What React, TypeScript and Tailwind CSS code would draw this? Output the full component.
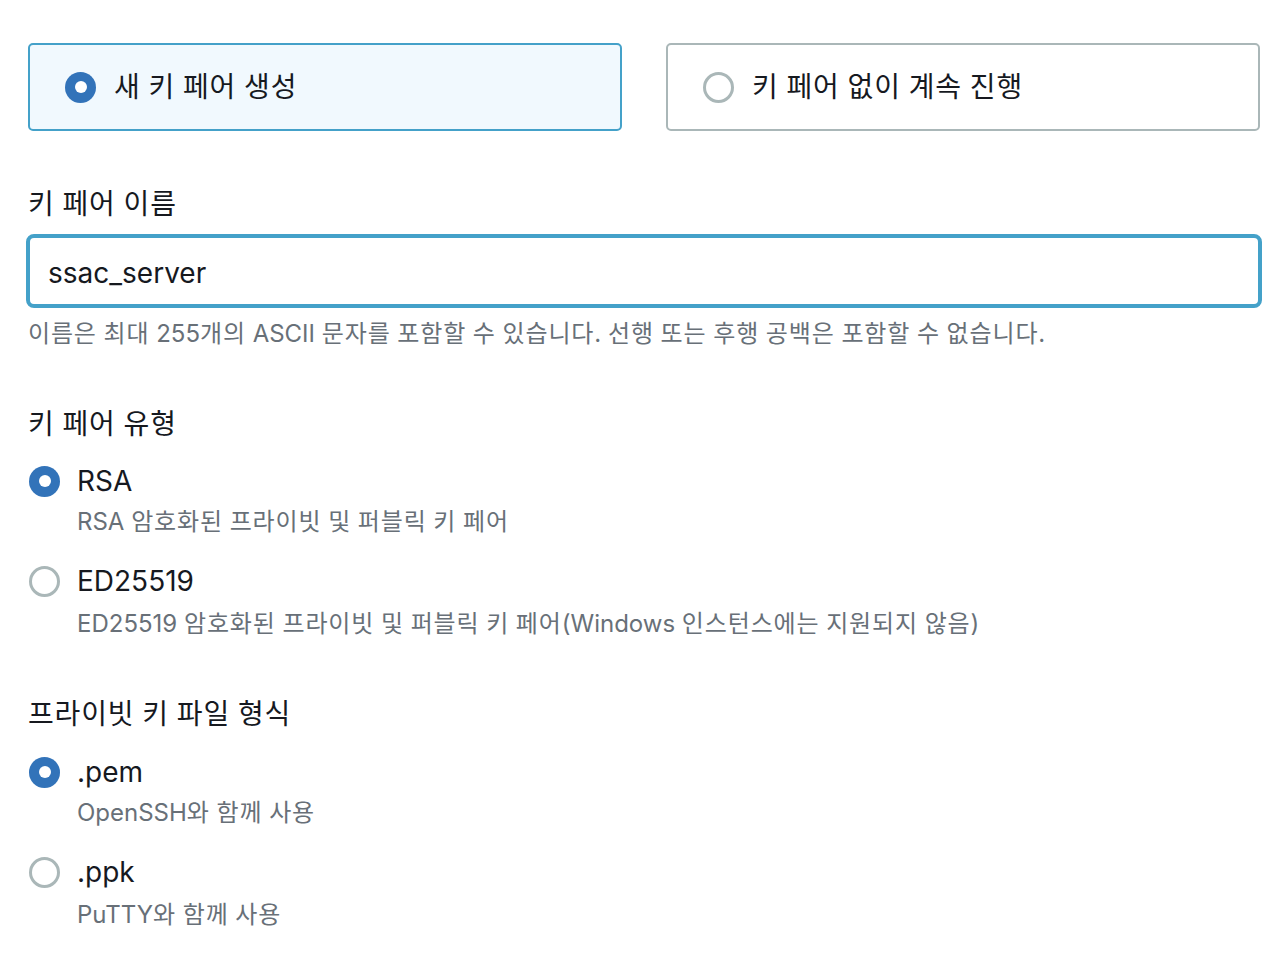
import React from "react";

const FONT = 'Inter, "Noto Sans CJK KR", sans-serif';

function K({ text }: { text: string }) {
  const parts = text.split(/([\uAC00-\uD7A3]+)/);
  return (
    <>
      {parts.map((p, i) =>
        /[\uAC00-\uD7A3]/.test(p) ? (
          <span key={i} className="tracking-[0.85px]">
            {p}
          </span>
        ) : (
          <React.Fragment key={i}>{p}</React.Fragment>
        )
      )}
    </>
  );
}

function Radio({ checked }: { checked: boolean }) {
  if (checked) {
    return (
      <span className="flex h-[31px] w-[31px] shrink-0 items-center justify-center rounded-full bg-[#3273b9]">
        <span className="h-[12px] w-[12px] rounded-full bg-white" />
      </span>
    );
  }
  return (
    <span className="h-[31px] w-[31px] shrink-0 rounded-full border-[3px] border-[#aab7b8] bg-white" />
  );
}

function Option({
  checked,
  label,
  desc,
  className,
  descClass,
}: {
  checked: boolean;
  label: string;
  desc: string;
  className?: string;
  descClass?: string;
}) {
  return (
    <div className={className}>
      <div className="flex h-[40px] items-center gap-[17px] pl-[1px]">
        <Radio checked={checked} />
        <span className="text-[28px] leading-[40px] text-[#16191f]">{label}</span>
      </div>
      <div className={`${descClass ?? "mt-[5px]"} pl-[49px] text-[24px] leading-[32px] text-[#687078]`}>
        <K text={desc} />
      </div>
    </div>
  );
}

export default function App() {
  return (
    <div
      className="min-h-[964px] w-[1276px] bg-white pl-[28px] pr-[16px] pt-[43px]"
      style={{ fontFamily: FONT }}
    >
      <div className="grid grid-cols-2 gap-[44px]">
        <div className="flex h-[88px] items-center gap-[18px] rounded-[5px] border-2 border-[#44a1c9] bg-[#f1f9fe] pl-[35px]">
          <Radio checked />
          <span className="text-[28px] leading-[40px] text-[#16191f]">
            <K text="새 키 페어 생성" />
          </span>
        </div>
        <div className="flex h-[88px] items-center gap-[18px] rounded-[5px] border-2 border-[#aab7b8] bg-white pl-[35px]">
          <Radio checked={false} />
          <span className="text-[28px] leading-[40px] text-[#16191f]">
            <K text="키 페어 없이 계속 진행" />
          </span>
        </div>
      </div>

      <div className="mt-[53px] text-[28px] leading-[40px] text-[#16191f]">
        <K text="키 페어 이름" />
      </div>
      <div className="-mx-[2px] mt-[10px] flex h-[74px] items-center rounded-[8px] border-4 border-[#44a1c9] bg-white pl-[18px] pt-[3px]">
        <span className="text-[28px] leading-[40px] text-[#16191f]">ssac_server</span>
      </div>
      <div className="mt-[10px] text-[24px] leading-[32px] text-[#687078]">
        <K text="이름은 최대 255개의 ASCII 문자를 포함할 수 있습니다. 선행 또는 후행 공백은 포함할 수 없습니다." />
      </div>

      <div className="mt-[54px] text-[28px] leading-[40px] text-[#16191f]">
        <K text="키 페어 유형" />
      </div>
      <Option className="mt-[17px]" checked label="RSA" desc="RSA 암호화된 프라이빗 및 퍼블릭 키 페어" />
      <Option
        className="mt-[23px]"
        descClass="mt-[7px]"
        checked={false}
        label="ED25519"
        desc="ED25519 암호화된 프라이빗 및 퍼블릭 키 페어(Windows 인스턴스에는 지원되지 않음)"
      />

      <div className="mt-[54px] text-[28px] leading-[40px] text-[#16191f]">
        <K text="프라이빗 키 파일 형식" />
      </div>
      <Option className="mt-[18px]" checked label=".pem" desc="OpenSSH와 함께 사용" />
      <Option className="mt-[23px]" descClass="mt-[7px]" checked={false} label=".ppk" desc="PuTTY와 함께 사용" />
    </div>
  );
}
